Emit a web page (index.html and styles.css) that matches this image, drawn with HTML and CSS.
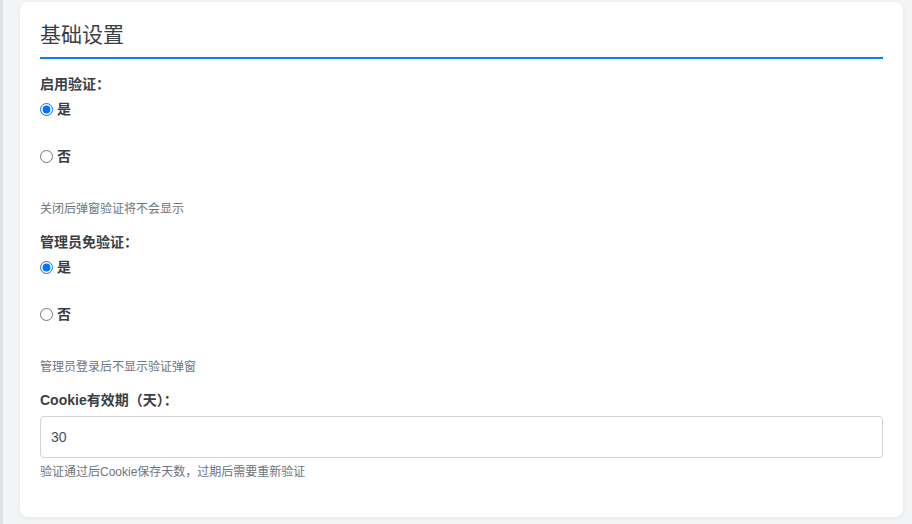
FILE: index.html
```html
<!DOCTYPE html>
<html lang="zh-CN">
<head>
    <meta charset="UTF-8">
    <meta name="viewport" content="width=device-width, initial-scale=1.0">
    <title>基础设置</title>
    <link rel="stylesheet" href="styles.css">
</head>
<body>
    <div class="card">
        <h2 class="card-title">基础设置</h2>

        <div class="field">
            <div class="field-label">启用验证：</div>
            <label class="radio-option"><input type="radio" name="enable" checked>是</label>
            <label class="radio-option"><input type="radio" name="enable">否</label>
            <div class="hint hint-radio">关闭后弹窗验证将不会显示</div>
        </div>

        <div class="field">
            <div class="field-label">管理员免验证：</div>
            <label class="radio-option"><input type="radio" name="admin" checked>是</label>
            <label class="radio-option"><input type="radio" name="admin">否</label>
            <div class="hint hint-radio">管理员登录后不显示验证弹窗</div>
        </div>

        <div class="field">
            <div class="field-label">Cookie有效期（天）：</div>
            <input class="text-input" type="text" value="30">
            <div class="hint">验证通过后Cookie保存天数，过期后需要重新验证</div>
        </div>
    </div>
</body>
</html>
```

FILE: styles.css
```css
body {
    font-family: "Liberation Sans", "Noto Sans CJK SC", sans-serif;
    font-size: 14px;
    line-height: 21px;
    color: #333;
    margin: 0;
    padding: 0;
    background-color: #f3f4f6;
    border-left: 3px solid #e0e1e5;
    min-height: 524px;
    box-sizing: border-box;
}
.card {
    margin: 2px 9px 0 17px;
    padding: 20px 20px 20px 20px;
    background-color: #fff;
    border-radius: 8px;
    box-shadow: 0 1px 4px rgba(0,0,0,0.06);
}
.card-title {
    margin: 0 0 15px 0;
    padding-bottom: 10px;
    font-size: 21px;
    line-height: 25px;
    font-weight: normal;
    color: #3a3f45;
    border-bottom: 2px solid #0a7cff;
}
.field {
    margin-bottom: 14px;
}
.field:last-child {
    margin-bottom: 16px;
}
.field-label {
    font-weight: bold;
    color: #3a3f45;
    margin-bottom: 4px;
}
.radio-option {
    display: flex;
    align-items: center;
    height: 21px;
    margin-bottom: 26px;
    font-weight: bold;
    color: #3a3f45;
}
.radio-option input {
    width: 13px;
    height: 13px;
    margin: 0 4px 0 0;
}
.hint {
    font-size: 12px;
    line-height: 18px;
    color: #6c757d;
    margin-top: 5px;
}
.hint-radio {
    margin-top: 33px;
}
.text-input {
    display: block;
    width: 100%;
    box-sizing: border-box;
    height: 42px;
    padding: 0 10px;
    font-family: "Liberation Sans", "Noto Sans CJK SC", sans-serif;
    font-size: 14px;
    color: #495057;
    border: 1px solid #ced4da;
    border-radius: 4px;
    margin-top: 5px;
}
```
